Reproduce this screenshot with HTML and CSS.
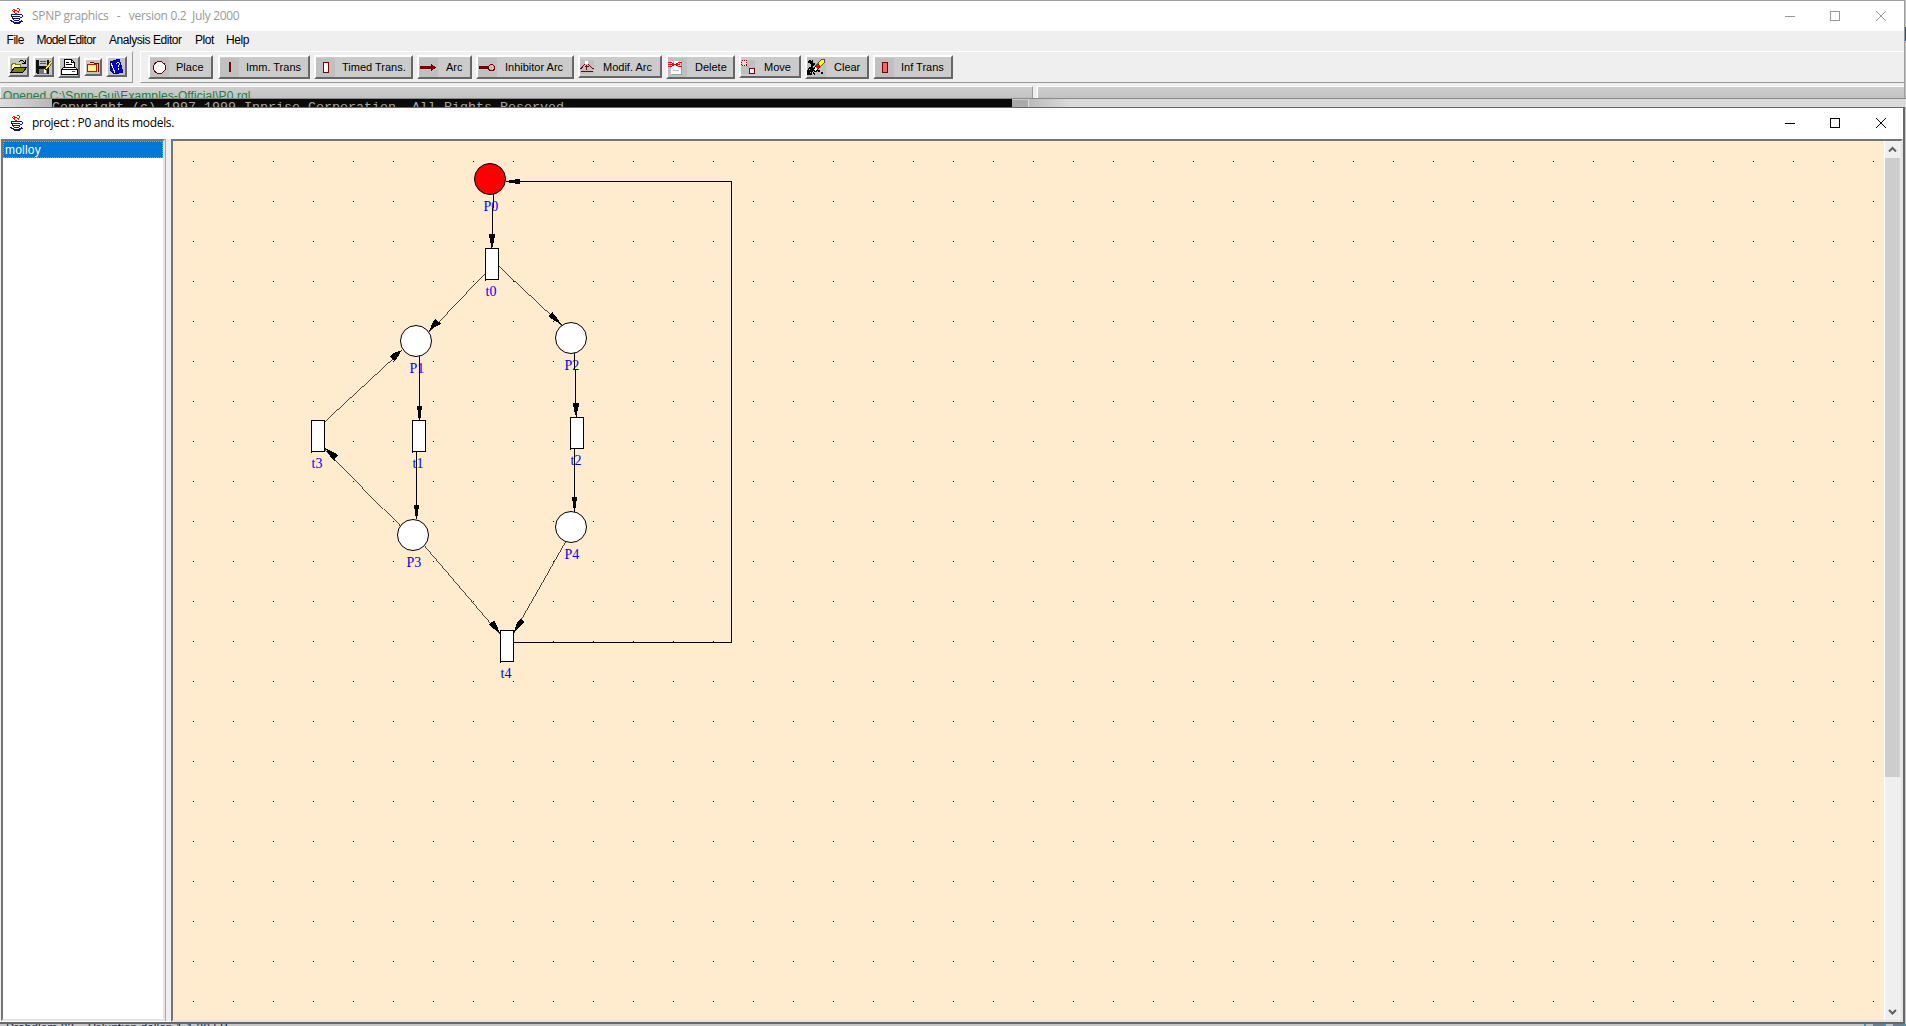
FILE: index.html
```html
<!DOCTYPE html>
<html lang="en">
<head>
<meta charset="utf-8">
<title>SPNP graphics</title>
<link rel="stylesheet" href="styles.css">
</head>
<body>
<svg class="defs" width="0" height="0">
  <symbol id="java" viewBox="0 0 16 16">
    <path d="M4 1h2M8 0h2M3 2h1M6 2h2M10 1h1M4 3h2M8 3h2M5 4h1M9 4h1M6 5h2M5 2h1M10 2h1" transform="translate(0 .5)" stroke="#e01818" fill="none"/>
    <path d="M2 6.500h9M11 6.500h2M13.500 7v2M12 9.500h1M2.500 7v2M3 8.500h8M3.500 9v2M11 9.500h1M4 10.500h7M4 11.500h1M10 11.500h1M5 12.500h5M1 12.500h2M2 13.500h3M10 13.500h4M4 14.500h8M5 15.500h6M12 12.500h1" stroke="#14147c" fill="none"/>
  </symbol>
</svg>

<section class="main-window">
  <header class="titlebar inactive">
    <svg class="app-icon" width="16" height="16"><use href="#java"/></svg>
    <span class="caption">SPNP graphics&nbsp;&nbsp; -&nbsp;&nbsp; version 0.2&nbsp; July 2000</span>
    <svg class="window-buttons" width="102" height="10"><path d="M0 5.500h10M45.500 .5h9v9h-9zM91 0l10 10M101 0l-10 10"/></svg>
  </header>
  <nav class="menu"><span class="m1">File</span><span class="m2">Model Editor</span><span class="m3">Analysis Editor</span><span class="m4">Plot</span><span class="m5">Help</span></nav>
  <div class="toolbar">
    <div class="file-tools">
      <button class="icon-btn b21"><svg width="17" height="17"><path d="M1 14V6h1V5h3v1h5v3" fill="#ffff80" stroke="#808000"/><path d="M1 14l4-5h12l-4 5z" fill="#808000" stroke="#000"/><path d="M9 3.500h1M10 2.500h3M13 3.500h1M15.500 2v4M12 5.500h4M14 4.500h2" stroke="#000" fill="none"/></svg></button>
      <button class="icon-btn b21"><svg width="17" height="17"><path d="M1 2h13v14H2l-1-1z" fill="#111"/><path d="M4 2h8v6H4z" fill="#c4c4c4"/><path d="M5 3.500h6M5 5.500h6" stroke="#555"/><path d="M4 11h8v5H4z" fill="#777"/><path d="M9 11h2v4H9z" fill="#fff"/><path d="M16 3l-5 6-1 3 3-2 4-5" fill="#ff0" stroke="#222" stroke-width=".7"/></svg></button>
      <button class="icon-btn b22"><svg width="18" height="18"><path d="M4.500 9.500V1.500h7l3 3v5z" fill="#fff" stroke="#000"/><path d="M11.500 1.500v3h3M6 4.500h3M6 6.500h6" stroke="#000" fill="none"/><path d="M3.500 9.500h12l2 2v5h-16v-5z" fill="#fff" stroke="#000"/><path d="M2 11.500h15" stroke="#000"/><path d="M12 13.500h3" stroke="#e02020"/></svg></button>
      <button class="icon-btn b18"><svg width="14" height="14"><path d="M3.500 3.500l1-1h3l1 1h3.500v8" fill="#ffe040" stroke="#800000"/><path d="M1.500 4.500h9v7h-9z" fill="#fff088" stroke="#b02000"/><path d="M3 6.500h6M3 8.500h6" stroke="#fff8d0" stroke-dasharray="1 1"/></svg></button>
      <button class="icon-btn b21"><svg width="17" height="17"><path d="M2 4l9-3 4 13-8 2-4-3z" fill="#0000e8" stroke="#000080"/><path d="M3 5l4 10" stroke="#fff"/><path d="M8 5.500h1M9 4.500h2M11.500 5v2M10.500 7v2M10.500 10v1.500" stroke="#fff" fill="none"/></svg></button>
    </div>
    <div class="model-tools">
      <button class="tool place"><svg width="19" height="19"><circle cx="9.500" cy="9.500" r="6" fill="#fff" stroke="#700"/></svg><span>Place</span></button>
      <button class="tool imm"><svg width="19" height="19"><path d="M10 4v10" stroke="#700" stroke-width="2"/></svg><span>Imm. Trans</span></button>
      <button class="tool timed"><svg width="19" height="19"><path d="M7.500 4.500h5v10h-5z" fill="#fff" stroke="#700"/></svg><span>Timed Trans.</span></button>
      <button class="tool arc"><svg width="19" height="19"><path d="M1 8h11V6l5 3.500-5 3.500v-2H1z" fill="#700"/></svg><span>Arc</span></button>
      <button class="tool inhibitor"><svg width="19" height="19"><path d="M1 8h9v3H1z" fill="#700"/><circle cx="13.500" cy="9.500" r="3" fill="none" stroke="#700"/></svg><span>Inhibitor Arc</span></button>
      <button class="tool modif short"><svg width="14" height="14"><path d="M0 8.500h1L6.500 2.500l6 6h1M1 11.500h12M6.500 5v5M5 6.500h4" stroke="#700" fill="none"/><path d="M5 1h3v3H5z" fill="#fff"/></svg><span>Modif. Arc</span></button>
      <button class="tool delete"><svg width="19" height="19"><path d="M4 4h10v13H4z" fill="#999"/><path d="M3 3h10v13H3z" fill="#fff"/><path d="M5 3v4M9 5v4M11 3v3M5 12.500h6" stroke="#bbb"/><path d="M0 4.500h3l8 4h3M0 8.500h3l8-4h3M0 6.500h12" stroke="#f00" fill="none"/></svg><span>Delete</span></button>
      <button class="tool move short"><svg width="14" height="14"><path d="M.5.5h5v5h-5z" fill="#ddd" stroke="#700" stroke-dasharray="1 1"/><path d="M6 6l3 3" stroke="#0dd"/><path d="M8.500 8.500h5v5h-5z" fill="#fff" stroke="#700"/></svg><span>Move</span></button>
      <button class="tool clear"><svg width="19" height="19"><path d="M1 4h2V2M3 6l2-2v5M1 11l4-2-3 5 4-3-2 5H1v-4M6 15l2 1M7 5v2M12 12v2M14 15h2" stroke="#000" stroke-width="1.600" fill="none"/><path d="M6 12l3-4 3 2-3 4z" fill="#fff" stroke="#000"/><path d="M8 8l3-3 3 3-3 3z" fill="#e00" stroke="#000" stroke-width=".5"/><path d="M11 5l4-4h2v4l-4 4z" fill="#ff0" stroke="#000" stroke-width=".6"/></svg><span>Clear</span></button>
      <button class="tool inf"><svg width="19" height="19"><path d="M7.500 4.500h5v10h-5z" fill="#ff6464" stroke="#700"/></svg><span>Inf Trans</span></button>
    </div>
  </div>
  <div class="status"><div class="message">Opened C:\Spnp-Gui\Examples-Official\P0.rgl</div><div class="rest"></div></div>
  <i class="desktop-edge"></i>
</section>

<div class="console-strip"><div class="gap"></div><div class="console">Copyright (c) 1997,1999 Inprise Corporation, All Rights Reserved</div><div class="console-scroll"></div><div class="behind"></div></div>

<section class="project-window">
  <header class="titlebar">
    <svg class="app-icon" width="16" height="16"><use href="#java"/></svg>
    <span class="caption">project : P0 and its models.</span>
    <svg class="window-buttons" width="102" height="10"><path d="M0 5.500h10M45.500 .5h9v9h-9zM91 0l10 10M101 0l-10 10"/></svg>
  </header>
  <div class="panes">
    <div class="model-list"><div class="item">molloy</div></div>
    <div class="splitter"></div>
    <div class="editor">
      <svg class="net" width="1711" height="879" viewBox="173 141 1711 879">
        <defs><pattern id="grid" x="193" y="161" width="40" height="40" patternUnits="userSpaceOnUse"><path d="M0 0h1v1H0z"/></pattern></defs>
        <path class="grid" d="M173 141h1711v879H173z" fill="url(#grid)"/>
        <g class="labels">
          <text x="483.500" y="211">P0</text><text x="485.500" y="296">t0</text>
          <text x="409.500" y="373">P1</text><text x="564.500" y="370">P2</text>
          <text x="311.500" y="468">t3</text><text x="412.500" y="468">t1</text><text x="570.500" y="465">t2</text>
          <text x="406.500" y="567">P3</text><text x="564.500" y="559">P4</text><text x="500.500" y="678">t4</text>
        </g>
        <g class="arcs">
          <path d="M493.500 194v14M492.500 208v27M491.500 245v4M419.500 356v64M574.500 353v16M575.500 369v38M576.500 407v10M416.500 452v67M574.500 449v63M514 642.500h217.500v-461H506"/>
          <path class="slanted" d="M485 272.500L429 331.500M499 266.500L562 325.500M325 421.500L402 350.500M400 525.500L325 448.500M425 545.500L500 633.500M565.500 542L514 632.500"/>
        </g>
        <g class="heads">
          <path d="M489 234h6v3l-1 2-1 8h-2l-1-8-1-2zM417 406h5v3l-1 2v7h-3v-7l-1-2zM573 403h6v3l-1 2-1 7h-2l-1-7-1-2zM414 505h5v3l-1 2v6h-3v-6l-1-2zM572 497h5v3l-1 2v6h-3v-6l-1-2zM509 180h5l2-1h4v1l-1 1 1 2v1h-4l-2-1h-5z"/>
          <path d="M429 331l5-11 1-1 1 1 5 3v1l-6 3zM562 325l-10-6-4-3 1-1 3-3 1 1 4 5zM402 350l-5 8-3 3-2-2-2-3 4-3zM325 448l10 5 3 3-2 1-1 3-1 1-4-5zM500 633l-9-6-2-3 1-1 4-2 1 1 2 4zM514 632l3-10 4-4 2 3 1 1-3 4z"/>
        </g>
        <g class="places"><circle class="marked" cx="490" cy="179" r="15.500"/><circle cx="416" cy="341" r="15.500"/><circle cx="571" cy="338" r="15.500"/><circle cx="413" cy="535" r="15.500"/><circle cx="571" cy="527" r="15.500"/></g>
        <g class="transitions"><path d="M485.500 248.500h13v31h-13zM311.500 420.500h13v31h-13zM412.500 420.500h13v31h-13zM570.500 417.500h13v31h-13zM500.500 630.500h13v31h-13z"/><path d="M485.500 279v2M311.500 451v2M412.500 451v2M570.500 448v2M500.500 661v2"/></g>
      </svg>
      <div class="scrollbar">
        <svg width="15" height="17"><path d="M4 10.500l3.500-3.500 3.500 3.500"/></svg>
        <div class="thumb"></div>
        <svg class="down" width="15" height="17"><path d="M4 7l3.500 3.500L11 7"/></svg>
      </div>
    </div>
  </div>
</section>
<div class="under"><span>Probdlem 02&nbsp; - Valuntion dellon 1-1.30 LB</span><i></i></div>
</body>
</html>
```
FILE: styles.css
```css
* { box-sizing: border-box; }
body { margin: 0; width: 1906px; height: 1026px; overflow: hidden; background: #c8c8c8; font-family: "Liberation Sans", sans-serif; font-size: 12px; color: #000; display: flex; flex-direction: column; }
.defs { position: absolute; }
svg { display: block; flex: none; }
button { font: inherit; color: inherit; padding: 0; margin: 0; border: 0; }

.main-window { position: relative; flex: none; height: 98px; width: 1905px; border-top: 1px solid #a09ca4; border-right: 1px solid #999; background: #efefef; }
.desktop-edge { position: absolute; right: -2px; top: 26px; width: 1px; height: 14px; background: #15549a; }
.titlebar { display: flex; align-items: center; height: 30px; background: #fff; padding-left: 9px; font-family: "Open Sans", "Noto Sans", sans-serif; }
.titlebar .caption { margin-left: 7px; white-space: nowrap; line-height: 20px; letter-spacing: -.31px; }
.app-icon, .window-buttons { shape-rendering: crispEdges; }
.window-buttons { margin-left: auto; margin-right: 17px; fill: none; stroke: #000; }
.inactive { color: #999; }
.inactive .window-buttons { stroke: #999; }
.menu { display: flex; height: 20px; padding-left: 7px; line-height: 19px; white-space: nowrap; }
.menu span { letter-spacing: -.45px; }
.menu .m1 { width: 30px; margin-left: -.5px; }
.menu .m2 { width: 72.5px; letter-spacing: -.7px; }
.m3 { width: 86px; }
.m4 { width: 31px; }

.toolbar { display: flex; gap: 7px; height: 32px; }
.file-tools, .model-tools { display: flex; align-items: flex-start; border-top: 1px solid #fff; border-bottom: 1px solid #999; }
.file-tools { width: 133px; border-right: 1px solid #999; padding: 4px 0 0 8px; gap: 4px; }
.model-tools { flex: 1; border-left: 1px solid #fff; padding: 3px 0 0 7px; gap: 4px; }
.icon-btn, .tool { background: #cbcbcb; border: 2px solid; border-color: #fff #666 #666 #fff; flex: none; display: flex; align-items: center; }
.icon-btn svg, .tool svg { shape-rendering: crispEdges; }
.icon-btn { justify-content: center; background: #c4c4c4; }
.b21 { width: 21px; height: 21px; }
.b22 { width: 22px; height: 22px; }
.b18 { width: 18px; height: 18px; margin-top: 2px; }
.tool { height: 24px; font-size: 11px; white-space: nowrap; }
.tool svg { background: #c0c0c0; }
.tool span { margin-left: 8px; line-height: 18px; }
.short { height: 23px; }
.place { width: 65px; }
.imm { width: 92px; margin-left: 1px; }
.imm span, .timed span, .inf span, .tool.place span { margin-left: 7px; }
.timed { width: 99px; }
.arc { width: 55px; }
.inhibitor { width: 98px; }
.modif { width: 84px; }
.modif span, .move span { margin-left: 9px; }
.delete { width: 69px; }
.move { width: 62px; }
.clear { width: 64px; }
.inf { width: 80px; }

.status { display: flex; gap: 4px; margin-top: 3px; height: 12px; padding-left: 1px; overflow: hidden; }
.message, .rest { border-top: 1px solid #fff; background: linear-gradient(#cecece, #c2c2c2); height: 12px; }
.message { width: 1032px; border-right: 1px solid #999; padding-left: 2px; color: #188038; line-height: 19px; white-space: nowrap; overflow: hidden; letter-spacing: .1px; }
.rest { flex: 1; border-left: 1px solid #fff; }

.console-strip { flex: none; display: flex; height: 9px; border-top: 1px solid #8a8a8a; overflow: hidden; }
.gap { width: 52px; background: linear-gradient(90deg, #dedede, #b8b8b8); }
.console { width: 960px; background: #0b0b0b; color: #a8a8a8; font: 13.330px/17px "Liberation Mono", monospace; white-space: pre; }
.console-scroll { width: 17px; background: #aaa; border-right: 1px solid #ddd; border-top: 1px solid #ccc; }
.behind { flex: 1; background: linear-gradient(90deg, #bbb, #dadada 40px); }

.project-window { flex: none; width: 1905px; height: 917px; border: 1px solid #686868; border-left: 0; border-right-width: 2px; border-bottom-width: 2px; background: #fff; display: flex; flex-direction: column; }
.project-window .titlebar { height: 31px; flex: none; padding-bottom: 1px; }
.project-window .window-buttons { margin-right: 16px; }
.panes { display: flex; height: 883px; background: #efefef; border-bottom: 1px solid #fff; }
.model-list { width: 164px; margin-left: 1px; height: 882px; border: 2px solid; border-color: #747474 #e6e6e6 #e3e3e3 #747474; background: #fff; }
.item { height: 17px; background: #0078d7; color: #fff; outline: 1px dotted #e08830; outline-offset: -1px; padding: 1px 0 0 2px; font-size: 12px; line-height: 17px; letter-spacing: .2px; }
.splitter { width: 6px; border-left: 1px solid #a8a8a8; }
.editor { display: flex; border: 2px solid; border-color: #747474 #e3e3e3 #e3e3e3 #747474; height: 883px; width: 1732px; background: #ffebcd; }
.scrollbar { width: 17px; border-left: 1px solid #fff; background: #efefef; display: flex; flex-direction: column; }
.scrollbar svg { fill: none; stroke: #606060; stroke-width: 2; }
.thumb { width: 15px; height: 619px; background: #cdcdcd; }
.down { margin-top: auto; }

.net { font: 14px "Liberation Serif", serif; }
.grid, .arcs, .heads, .transitions { shape-rendering: crispEdges; }
.labels { fill: #00f; }
.arcs { fill: none; stroke: #000; }
.slanted { stroke-width: .72; }
.heads { fill: #000; }
.places circle, .transitions path { fill: #fff; stroke: #000; }
.places .marked { fill: #f00; }

.under { display: flex; justify-content: space-between; height: 2px; overflow: hidden; background: #c6c6c6; color: #15315a; font-size: 12px; line-height: 8px; padding-left: 6px; white-space: nowrap; }
.under i { width: 42px; background: repeating-linear-gradient(90deg, #3b9bb8 0 2px, #b8c4ca 2px 9px, #6a7f94 9px 20px); }
```
